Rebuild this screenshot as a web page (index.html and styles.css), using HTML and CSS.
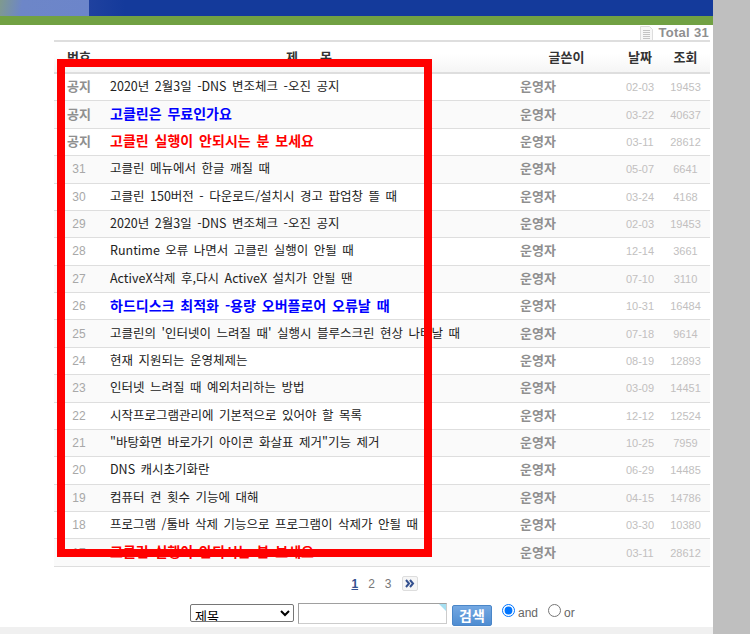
FILE: index.html
```html
<!DOCTYPE html>
<html lang="ko">

<head>
    <meta charset="UTF-8">
    <meta name="viewport" content="width=device-width, initial-scale=1.0">
    <title>공지사항</title>
    <link rel="stylesheet" href="styles.css">
</head>

<body>
    <div class="page">
        <div class="banner">
            <div class="banner-photo"></div>
        </div>
        <div class="stripe"></div>
        <div class="board">
            <div class="total">
                <svg class="total-icon" width="15" height="15" viewBox="0 0 15 15">
                    <path d="M1.5 .5H10.5L13.5 3.5V14.5H1.5Z" fill="#f7f7f7" stroke="#ddd" />
                    <path d="M4 4.5H11M4 6.5H11M4 8.5H11M4 10.5H11M4 12.5H11" stroke="#c4c4c4" />
                </svg>
                <span>Total 31</span>
            </div>
            <table class="list">
                <thead>
                    <tr>
                        <th class="col-num">번호</th>
                        <th class="col-title">제 &nbsp; &nbsp; &nbsp;목</th>
                        <th class="col-author">글쓴이</th>
                        <th class="col-date">날짜</th>
                        <th class="col-hits">조회</th>
                    </tr>
                </thead>
                <tbody>
                    <tr>
                        <td class="num notice">공지</td>
                        <td class="subject">2020년 2월3일 -DNS 변조체크 -오진 공지</td>
                        <td class="author">운영자</td>
                        <td class="date">02-03</td>
                        <td class="hits">19453</td>
                    </tr>
                    <tr>
                        <td class="num notice">공지</td>
                        <td class="subject blue">고클린은 무료인가요</td>
                        <td class="author">운영자</td>
                        <td class="date">03-22</td>
                        <td class="hits">40637</td>
                    </tr>
                    <tr>
                        <td class="num notice">공지</td>
                        <td class="subject red">고클린 실행이 안되시는 분 보세요</td>
                        <td class="author">운영자</td>
                        <td class="date">03-11</td>
                        <td class="hits">28612</td>
                    </tr>
                    <tr>
                        <td class="num">31</td>
                        <td class="subject">고클린 메뉴에서 한글 깨질 때</td>
                        <td class="author">운영자</td>
                        <td class="date">05-07</td>
                        <td class="hits">6641</td>
                    </tr>
                    <tr>
                        <td class="num">30</td>
                        <td class="subject">고클린 150버전 - 다운로드/설치시 경고 팝업창 뜰 때</td>
                        <td class="author">운영자</td>
                        <td class="date">03-24</td>
                        <td class="hits">4168</td>
                    </tr>
                    <tr>
                        <td class="num">29</td>
                        <td class="subject">2020년 2월3일 -DNS 변조체크 -오진 공지</td>
                        <td class="author">운영자</td>
                        <td class="date">02-03</td>
                        <td class="hits">19453</td>
                    </tr>
                    <tr>
                        <td class="num">28</td>
                        <td class="subject">Runtime 오류 나면서 고클린 실행이 안될 때</td>
                        <td class="author">운영자</td>
                        <td class="date">12-14</td>
                        <td class="hits">3661</td>
                    </tr>
                    <tr>
                        <td class="num">27</td>
                        <td class="subject">ActiveX삭제 후,다시 ActiveX 설치가 안될 땐</td>
                        <td class="author">운영자</td>
                        <td class="date">07-10</td>
                        <td class="hits">3110</td>
                    </tr>
                    <tr>
                        <td class="num">26</td>
                        <td class="subject blue">하드디스크 최적화 -용량 오버플로어 오류날 때</td>
                        <td class="author">운영자</td>
                        <td class="date">10-31</td>
                        <td class="hits">16484</td>
                    </tr>
                    <tr>
                        <td class="num">25</td>
                        <td class="subject">고클린의 '인터넷이 느려질 때' 실행시 블루스크린 현상 나타날 때</td>
                        <td class="author">운영자</td>
                        <td class="date">07-18</td>
                        <td class="hits">9614</td>
                    </tr>
                    <tr>
                        <td class="num">24</td>
                        <td class="subject">현재 지원되는 운영체제는</td>
                        <td class="author">운영자</td>
                        <td class="date">08-19</td>
                        <td class="hits">12893</td>
                    </tr>
                    <tr>
                        <td class="num">23</td>
                        <td class="subject">인터넷 느려질 때 예외처리하는 방법</td>
                        <td class="author">운영자</td>
                        <td class="date">03-09</td>
                        <td class="hits">14451</td>
                    </tr>
                    <tr>
                        <td class="num">22</td>
                        <td class="subject">시작프로그램관리에 기본적으로 있어야 할 목록</td>
                        <td class="author">운영자</td>
                        <td class="date">12-12</td>
                        <td class="hits">12524</td>
                    </tr>
                    <tr>
                        <td class="num">21</td>
                        <td class="subject">"바탕화면 바로가기 아이콘 화살표 제거"기능 제거</td>
                        <td class="author">운영자</td>
                        <td class="date">10-25</td>
                        <td class="hits">7959</td>
                    </tr>
                    <tr>
                        <td class="num">20</td>
                        <td class="subject">DNS 캐시초기화란</td>
                        <td class="author">운영자</td>
                        <td class="date">06-29</td>
                        <td class="hits">14485</td>
                    </tr>
                    <tr>
                        <td class="num">19</td>
                        <td class="subject">컴퓨터 켠 횟수 기능에 대해</td>
                        <td class="author">운영자</td>
                        <td class="date">04-15</td>
                        <td class="hits">14786</td>
                    </tr>
                    <tr>
                        <td class="num">18</td>
                        <td class="subject">프로그램 /툴바 삭제 기능으로 프로그램이 삭제가 안될 때</td>
                        <td class="author">운영자</td>
                        <td class="date">03-30</td>
                        <td class="hits">10380</td>
                    </tr>
                    <tr>
                        <td class="num">17</td>
                        <td class="subject red">고클린 실행이 안되시는 분 보세요</td>
                        <td class="author">운영자</td>
                        <td class="date">03-11</td>
                        <td class="hits">28612</td>
                    </tr>
                </tbody>
            </table>
            <div class="pager">
                <a class="current" href="#">1</a>
                <a href="#">2</a>
                <a href="#">3</a>
                <a class="next" href="#">
                    <svg width="10" height="9" viewBox="0 0 10 9">
                        <path d="M1 1L4 4.5L1 8M5 1L8 4.5L5 8" fill="none" stroke="#34508f" stroke-width="2" />
                    </svg>
                </a>
            </div>
            <form class="search">
                <select class="search-field">
                    <option>제목</option>
                </select>
                <span class="search-box"><input class="search-input" type="text"></span>
                <button class="search-btn" type="button">검색</button>
                <label class="radio"><input type="radio" name="op" checked>and</label>
                <label class="radio"><input type="radio" name="op">or</label>
            </form>
        </div>
        <div class="foot"></div>
        <div class="highlight"></div>
    </div>
    <div class="side"></div>
</body>

</html>
```

FILE: styles.css
```css
:root {
    --line-color: #dedede;
    --row-alt: #fafafa;
    --muted: #8f8f8f;
    --faint: #c2bfbf;
}

html,
body {
    height: 100%;
}

body {
    margin: 0;
    display: flex;
    overflow: hidden;
    background: #fff;
    font-family: "Noto Sans CJK KR", "Liberation Sans", sans-serif;
    font-size: 12px;
    color: #222;
}

.page {
    position: relative;
    width: 713px;
    height: 634px;
    display: flex;
    flex-direction: column;
}

.side {
    flex: 1;
    background: #bfbfbf;
}

.banner {
    flex: none;
    height: 16px;
    background: linear-gradient(90deg, #1f419f 89px, #143a9b 125px);
}

.banner-photo {
    width: 89px;
    height: 16px;
    background: linear-gradient(100deg, #7f9a8e 0, #6d86c8 25%, #6c85ca 100%);
}

.stripe {
    flex: none;
    height: 9px;
    background: #71a143;
}

.board {
    flex: 1;
    min-height: 0;
    padding-left: 54px;
    padding-right: 3px;
}

.total {
    height: 15px;
    display: flex;
    justify-content: flex-end;
    align-items: center;
    gap: 4px;
    padding-right: 1px;
    font-family: "Liberation Sans", sans-serif;
    font-weight: bold;
    font-size: 13px;
    letter-spacing: 0.3px;
    color: var(--muted);
}

.total-icon {
    margin-top: 1px;
}

.list {
    width: 656px;
    table-layout: fixed;
    border-collapse: collapse;
    border-top: 2px solid var(--line-color);
}

.list th {
    height: 28px;
    padding: 0 0 2px;
    font-size: 13px;
    font-weight: bold;
    color: #333;
    background: linear-gradient(#fff 40%, #f5f5f5);
    border-bottom: 2px solid var(--line-color);
}

.list td {
    height: 26.39px;
    padding: 0;
    border-bottom: 1px solid var(--line-color);
    white-space: nowrap;
}

.list tbody tr:nth-child(even) {
    background: var(--row-alt);
}

.col-num {
    width: 50px;
}

.col-author {
    width: 105px;
}

.col-date {
    width: 42px;
}

.col-hits {
    width: 49px;
}

.num {
    text-align: center;
    font-family: "Liberation Sans", sans-serif;
    font-size: 12px;
    color: #a8a8a8;
}

.list td.notice {
    height: 23.39px;
    padding-bottom: 3px;
    font-family: "Noto Sans CJK KR", sans-serif;
    font-weight: bold;
    font-size: 13px;
    color: var(--muted);
}

.list td.subject {
    height: 23.39px;
    padding: 0 0 3px 6px;
    font-size: 12.5px;
    word-spacing: 2px;
    color: #222;
}

.list td.blue {
    color: #0000ff;
    font-size: 14px;
    font-weight: bold;
}

.list td.red {
    color: #ff0000;
    font-size: 14px;
    font-weight: bold;
}

.list td.author {
    height: 23.39px;
    padding: 0 0 3px 6px;
    font-size: 13px;
    font-weight: bold;
    color: var(--muted);
}

.date,
.hits {
    text-align: center;
    font-family: "Liberation Sans", sans-serif;
    font-size: 11px;
    color: var(--faint);
}

.pager {
    display: flex;
    justify-content: center;
    align-items: center;
    gap: 10px;
    height: 34px;
    padding: 0 0 2px 5px;
    font-family: "Liberation Sans", sans-serif;
    font-size: 12px;
}

.pager a {
    color: #777;
    text-decoration: none;
}

.pager .current {
    color: #34508f;
    font-weight: bold;
    text-decoration: underline;
}

.pager .next {
    width: 14px;
    height: 13px;
    display: flex;
    align-items: center;
    justify-content: center;
    border: 1px solid #ddd;
    border-radius: 2px;
    background: #f6f6f6;
}

.search {
    display: flex;
    align-items: flex-start;
    padding-left: 136px;
}

.search-field {
    width: 104px;
    height: 18px;
    margin: 1px 4px 0 0;
    padding: 0;
    font-family: "Noto Sans CJK KR", sans-serif;
    font-size: 13px;
    border: 1px solid #767676;
    border-radius: 2px;
    background: #fff;
}

.search-box {
    position: relative;
    width: 149px;
    height: 21px;
    margin-right: 5px;
}

.search-box::after {
    content: "";
    position: absolute;
    top: 1px;
    right: 1px;
    border-top: 7px solid #a6e0f2;
    border-left: 7px solid transparent;
}

.search-input {
    box-sizing: border-box;
    width: 100%;
    height: 100%;
    padding: 0;
    border: 1px solid #ccc;
    border-top-color: #a0a0a0;
    border-left-color: #a0a0a0;
    outline: none;
}

.search-btn {
    width: 40px;
    height: 21px;
    margin: 2px 10px 0 0;
    padding: 0;
    border: 1px solid #4a86c8;
    border-radius: 2px;
    background: linear-gradient(#74a8e2, #4f8dd2);
    color: #fff;
    font-family: "Noto Sans CJK KR", sans-serif;
    font-size: 14px;
    line-height: 17px;
    font-weight: bold;
}

.radio {
    display: flex;
    align-items: flex-start;
    gap: 3px;
    margin-right: 10px;
    color: #666;
    font-family: "Liberation Sans", sans-serif;
    font-size: 12px;
    line-height: 20px;
}

.radio input {
    width: 13px;
    height: 13px;
    margin: 1px 0 0;
}

.foot {
    flex: none;
    height: 7px;
    background: #f0f0f0;
}

/* 빨간 표시 상자 */
.highlight {
    position: absolute;
    left: 57px;
    top: 59px;
    width: 359px;
    height: 482px;
    border: 8px solid #ff0000;
}
```
